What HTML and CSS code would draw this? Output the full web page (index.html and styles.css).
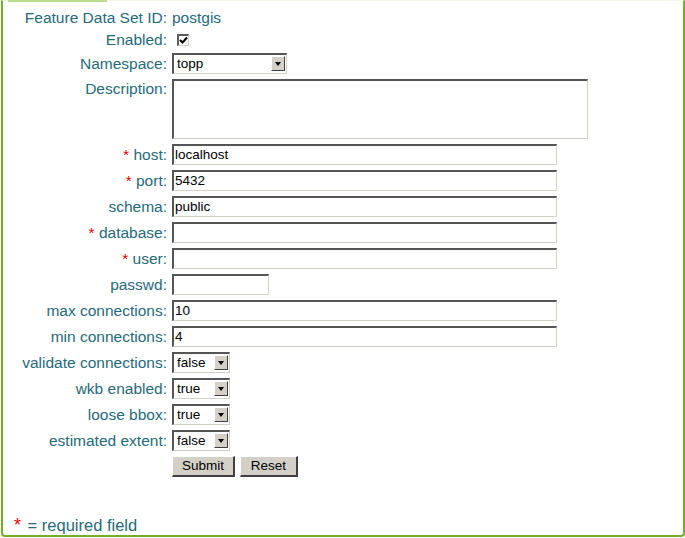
FILE: index.html
```html
<!DOCTYPE html>
<html>
<head>
<meta charset="utf-8">
<link rel="stylesheet" href="styles.css">
</head>
<body>
<div class="frame">
  <div class="tab"></div>
  <form class="form">
    <div class="lbl">Feature Data Set ID:</div><div class="val">postgis</div>
    <div class="lbl">Enabled:</div><div class="val"><span class="check"><svg width="9" height="9" viewBox="0 0 9 9"><path d="M1 4 L3.5 6.5 L8 1.5" stroke="#000" stroke-width="2" fill="none"/></svg></span></div>
    <div class="lbl">Namespace:</div><div class="val"><span class="select ns"><span class="opt">topp</span><span class="arrow"></span></span></div>
    <div class="lbl top">Description:</div><div class="val"><span class="field area"></span></div>
    <div class="lbl"><span class="req">*</span> host:</div><div class="val"><span class="field wide">localhost</span></div>
    <div class="lbl"><span class="req">*</span> port:</div><div class="val"><span class="field wide">5432</span></div>
    <div class="lbl">schema:</div><div class="val"><span class="field wide">public</span></div>
    <div class="lbl"><span class="req">*</span> database:</div><div class="val"><span class="field wide"></span></div>
    <div class="lbl"><span class="req">*</span> user:</div><div class="val"><span class="field wide"></span></div>
    <div class="lbl">passwd:</div><div class="val"><span class="field short"></span></div>
    <div class="lbl">max connections:</div><div class="val"><span class="field wide">10</span></div>
    <div class="lbl">min connections:</div><div class="val"><span class="field wide">4</span></div>
    <div class="lbl">validate connections:</div><div class="val"><span class="select sm"><span class="opt">false</span><span class="arrow"></span></span></div>
    <div class="lbl">wkb enabled:</div><div class="val"><span class="select sm"><span class="opt">true</span><span class="arrow"></span></span></div>
    <div class="lbl">loose bbox:</div><div class="val"><span class="select sm"><span class="opt">true</span><span class="arrow"></span></span></div>
    <div class="lbl">estimated extent:</div><div class="val"><span class="select sm"><span class="opt">false</span><span class="arrow"></span></span></div>
    <div class="lbl"></div><div class="val buttons"><span class="btn submit">Submit</span><span class="btn reset">Reset</span></div>
  </form>
  <div class="note"><span class="req">*</span> = required field</div>
</div>
</body>
</html>
```

FILE: styles.css
```css
html, body {
  margin: 0;
  padding: 0;
  background: #fff;
}
body {
  font-family: "Liberation Sans", Arial, sans-serif;
  font-size: 15.5px;
  color: #266a7a;
}
.frame {
  position: relative;
  margin-left: 1px;
  width: 680px;
  height: 534px;
  border-left: 2px solid #72b026;
  border-right: 2px solid #72b026;
  border-bottom: 2px solid #72b026;
  border-top: 1px solid #f2f9ea;
  border-radius: 0 0 4px 4px;
  box-sizing: content-box;
}
.tab {
  position: absolute;
  left: 5px;
  top: -1px;
  width: 99px;
  height: 2px;
  background: #b9df8e;
}
.form {
  display: grid;
  grid-template-columns: 164px auto;
  column-gap: 5px;
  row-gap: 5px;
  padding-top: 8px;
  align-items: center;
}
.lbl {
  text-align: right;
  white-space: nowrap;
  line-height: 17px;
}
.lbl.top {
  align-self: start;
  padding-top: 1px;
}
.val {
  display: flex;
  align-items: center;
  line-height: 17px;
}
.req {
  color: #e00000;
}
.check {
  display: inline-block;
  width: 9px;
  height: 9px;
  margin-left: 5px;
  border-top: 2px solid #5a5a5a;
  border-left: 2px solid #5a5a5a;
  border-right: 1px solid #d4d0c8;
  border-bottom: 1px solid #d4d0c8;
  background: #fff;
  position: relative;
}
.check svg {
  position: absolute;
  left: 0;
  top: 0;
}
.field {
  display: block;
  box-sizing: border-box;
  height: 21px;
  border-top: 2px solid #555;
  border-left: 2px solid #555;
  border-right: 1px solid #d4d0c8;
  border-bottom: 1px solid #d4d0c8;
  background: #fff;
  color: #000;
  font-size: 13.5px;
  line-height: 17px;
  padding-left: 1px;
}
.wide { width: 385px; }
.short { width: 97px; }
.area {
  width: 416px;
  height: 60px;
}
.select {
  box-sizing: border-box;
  display: flex;
  height: 21px;
  border-top: 2px solid #555;
  border-left: 2px solid #555;
  border-right: 1px solid #d4d0c8;
  border-bottom: 1px solid #d4d0c8;
  background: #fff;
  color: #000;
  font-size: 13.5px;
}
.select .opt {
  flex: 1;
  padding-left: 3px;
  line-height: 17px;
}
.select .arrow {
  width: 14px;
  height: 15px;
  margin: 1px 1px 0 0;
  background: #d4d0c8;
  border-top: 1px solid #fff;
  border-left: 1px solid #fff;
  border-right: 1px solid #404040;
  border-bottom: 1px solid #404040;
  box-sizing: border-box;
  position: relative;
}
.select .arrow::after {
  content: "";
  position: absolute;
  left: 3px;
  top: 5px;
  border-left: 3px solid transparent;
  border-right: 3px solid transparent;
  border-top: 4px solid #000;
}
.ns { width: 115px; }
.sm { width: 58px; }
.buttons {
  gap: 5px;
}
.btn {
  box-sizing: border-box;
  display: block;
  height: 21px;
  background: #d4d0c8;
  color: #000;
  font-size: 13.5px;
  line-height: 18px;
  text-align: center;
  border-top: 1px solid #fff;
  border-left: 1px solid #fff;
  border-right: 2px solid #404040;
  border-bottom: 2px solid #404040;
}
.submit { width: 63px; }
.reset { width: 58px; }
.note {
  position: absolute;
  left: 11px;
  bottom: 1px;
  font-size: 16.5px;
  line-height: 17px;
}
.note .req {
  font-size: 18px;
  margin-right: 2px;
}
```
